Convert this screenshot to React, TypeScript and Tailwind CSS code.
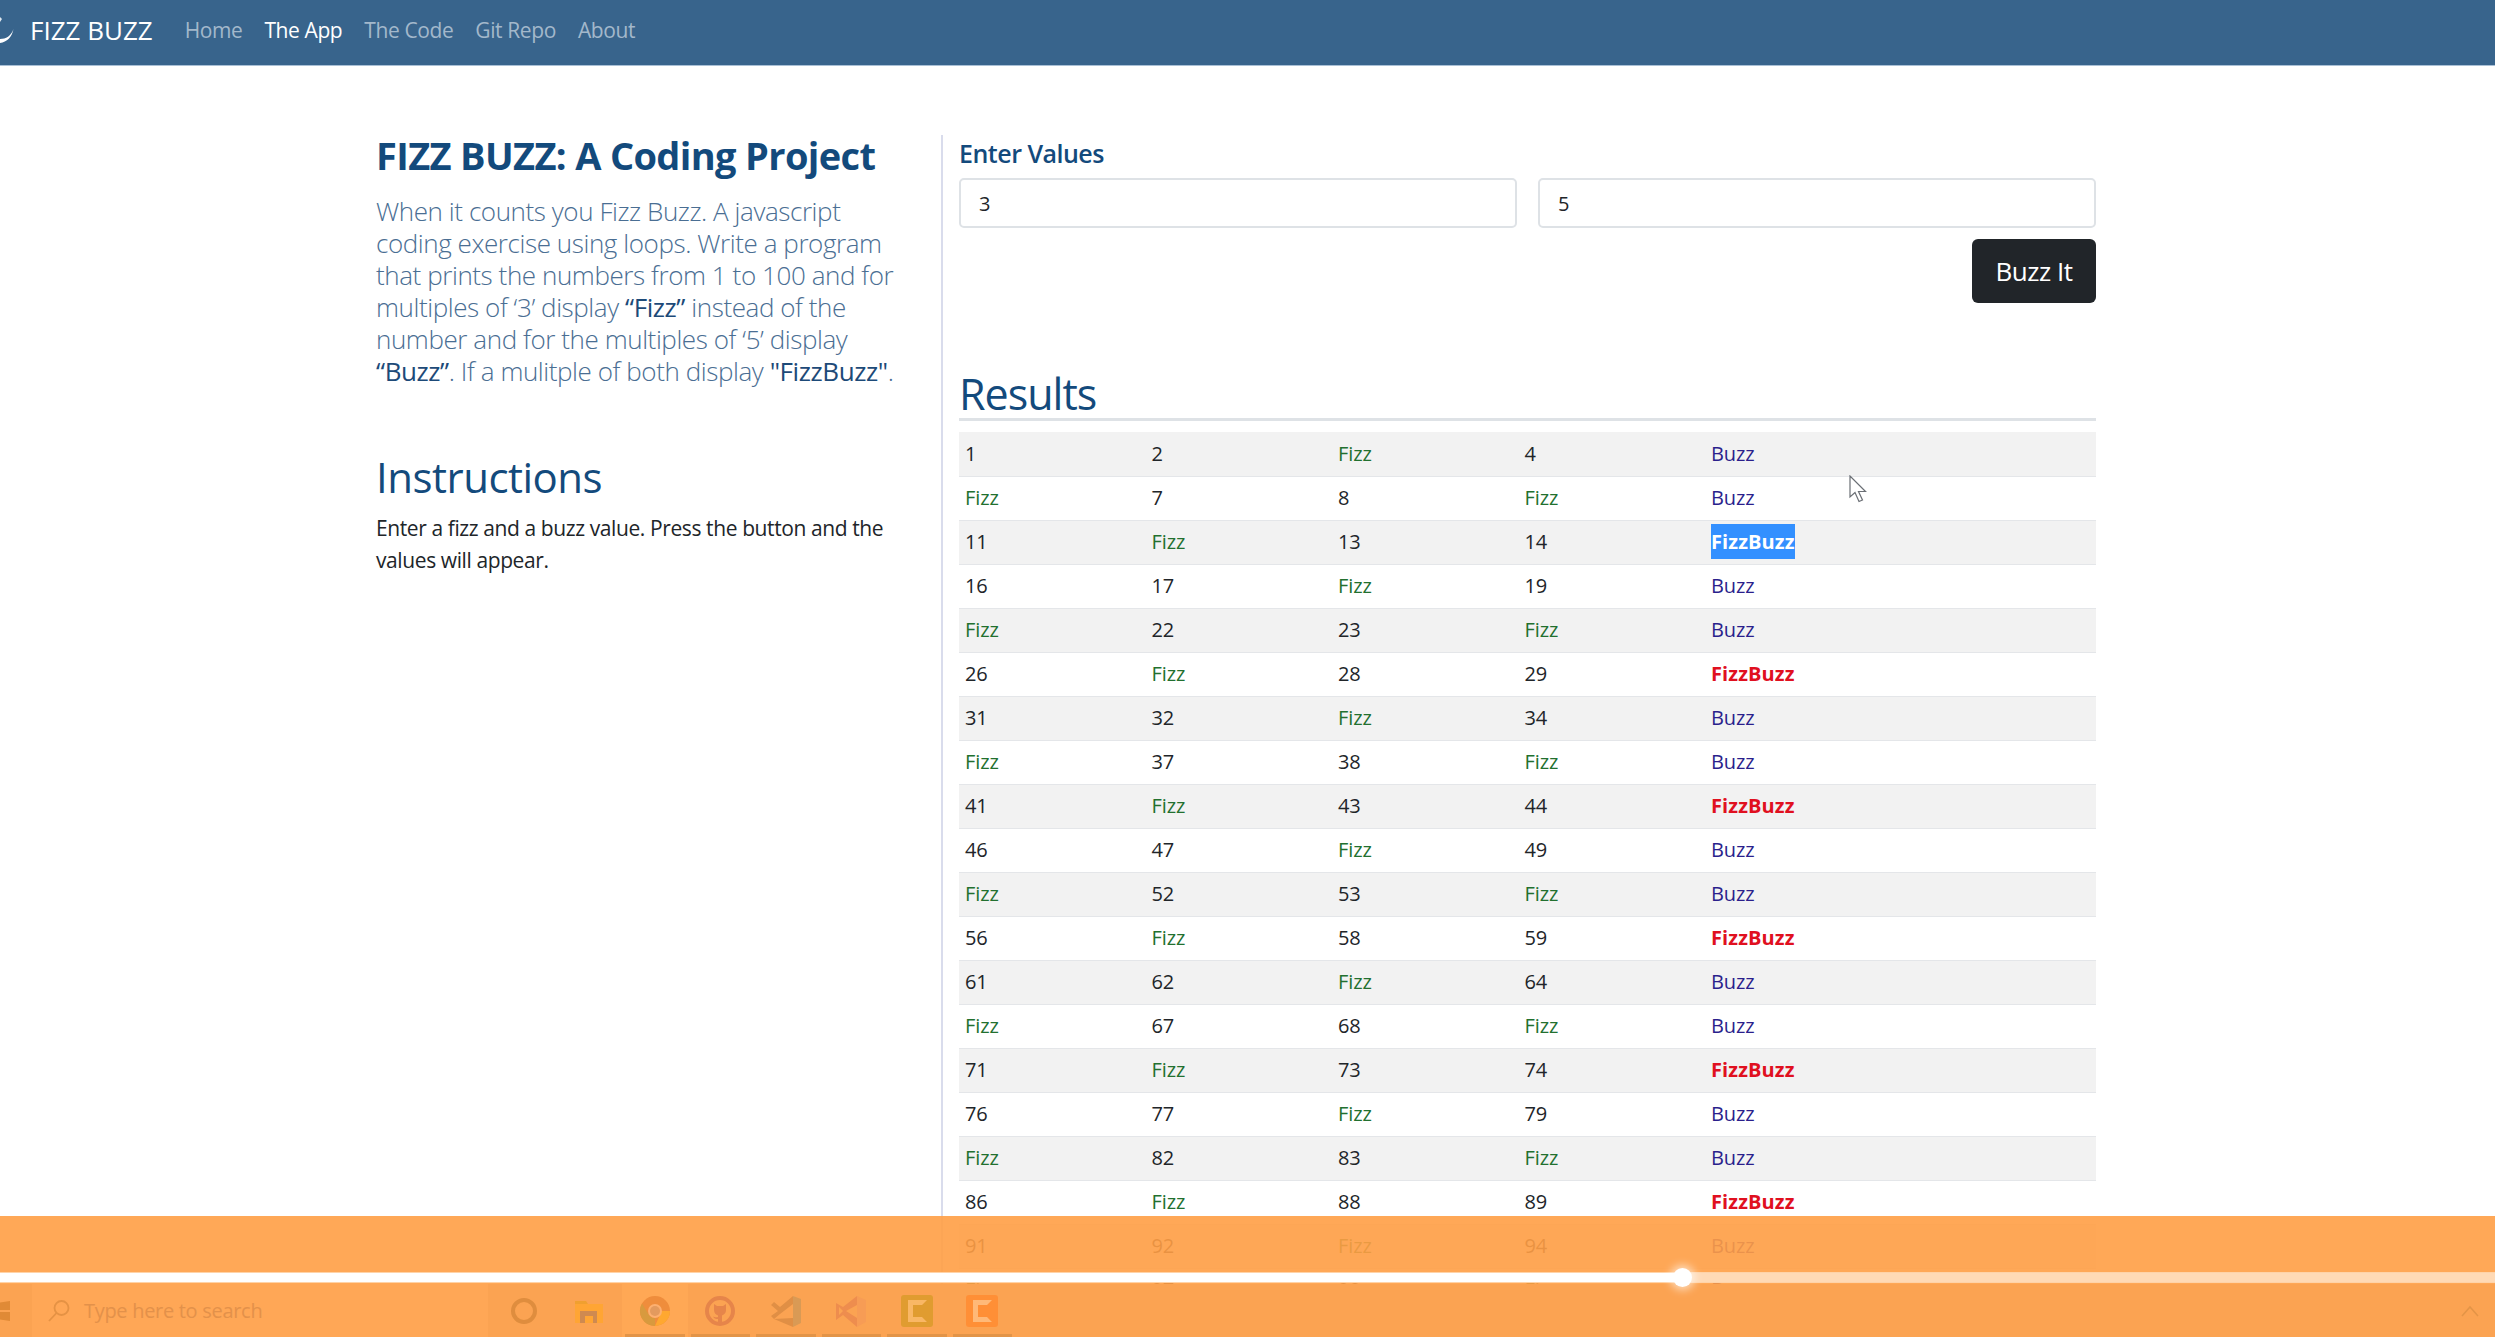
const NAV = ["Home", "The App", "The Code", "Git Repo", "About"];

function cellFor(n: number) {
  if (n % 15 === 0) return { text: "FizzBuzz", cls: "font-bold tracking-[0.1px] text-[#e0101f]" };
  if (n % 5 === 0) return { text: "Buzz", cls: "text-[#2b1f8c]" };
  if (n % 3 === 0) return { text: "Fizz", cls: "text-[#22702f]" };
  return { text: String(n), cls: "text-[#212529]" };
}

const ROWS = Array.from({ length: 20 }, (_, r) =>
  Array.from({ length: 5 }, (_, c) => r * 5 + c + 1)
);

function Moon() {
  return (
    <svg width="14" height="30" viewBox="0 0 14 30" className="shrink-0">
      <path d="M0 27C7 26 12 21 13.500 13C11 20 6 23 0 23Z" fill="#fff" />
      <path d="M0 1L2 3L0 6Z" fill="#dfe7ee" />
    </svg>
  );
}

function Navbar() {
  return (
    <nav className="flex h-[66px] items-center border-b border-[#a9c0d6] bg-[#38648c] pb-[4px]">
      <Moon />
      <span className="ml-[16px] text-[26px] text-white">FIZZ BUZZ</span>
      <ul className="ml-[32px] flex gap-[22px] text-[21px] tracking-[-0.4px] text-[#a3b8cb]">
        {NAV.map((item) => (
          <li key={item} className={item === "The App" ? "text-white" : ""}>
            {item}
          </li>
        ))}
      </ul>
    </nav>
  );
}

function Intro() {
  return (
    <section className="w-[565px] shrink-0 pr-[29px]">
      <h1 className="-mt-[5px] text-[38px] leading-[50px] font-bold tracking-[-0.65px] text-[#134a7c]">
        FIZZ BUZZ: A Coding Project
      </h1>
      <p className="mt-[15px] text-[26px] leading-[32px] font-light tracking-[-0.42px] text-[#4a6e93]">
        When it counts you Fizz Buzz. A javascript coding exercise using loops. Write a program
        that prints the numbers from 1 to 100 and for multiples of ‘3’ display{" "}
        <span className="font-normal text-[#1d4a78]">“Fizz”</span> instead of the number and for
        the multiples of ‘5’ display <span className="font-normal text-[#1d4a78]">“Buzz”</span>.
        If a mulitple of both display <span className="font-normal text-[#1d4a78]">"FizzBuzz"</span>.
      </p>
      <h2 className="mt-[62px] text-[42px] leading-[56px] font-medium tracking-[-0.5px] text-[#134a7c]">
        Instructions
      </h2>
      <p className="mt-[7px] text-[21px] leading-[32px] tracking-[-0.4px] text-[#212529]">
        Enter a fizz and a buzz value. Press the button and the values will appear.
      </p>
    </section>
  );
}

function ValueInput({ value }: { value: string }) {
  return (
    <input
      readOnly
      value={value}
      className="h-[50px] w-[558px] rounded-[5px] border-2 border-[#dee2e6] bg-white px-[18px] text-[20px] text-[#212529] outline-none"
    />
  );
}

function Results() {
  return (
    <section className="w-[1155px] shrink-0 border-l-2 border-[#d9dcec] pl-[16px]">
      <label className="block text-[25px] leading-[36px] font-semibold tracking-[-0.5px] text-[#134a7c]">
        Enter Values
      </label>
      <div className="mt-[7px] flex justify-between">
        <ValueInput value="3" />
        <ValueInput value="5" />
      </div>
      <div className="mt-[11px] flex justify-end">
        <button className="h-[64px] w-[124px] rounded-[6px] bg-[#212529] text-[26px] tracking-[-0.5px] text-white">
          Buzz It
        </button>
      </div>
      <h2 className="mt-[67px] border-b-[3px] border-[#dee2e6] text-[43px] leading-[48px] font-medium tracking-[-1px] text-[#134a7c]">
        Results
      </h2>
      <table className="mt-[11px] w-full table-fixed border-collapse text-[20px] tracking-[-0.1px]">
        <colgroup>
          <col className="w-[186.500px]" />
          <col className="w-[186.500px]" />
          <col className="w-[186.500px]" />
          <col className="w-[186.500px]" />
          <col />
        </colgroup>
        <tbody>
          {ROWS.map((row, i) => (
            <tr key={row[0]} className={`h-[44px] border-b border-[#e4e6e9] ${i % 2 === 0 ? "bg-[#f2f2f2]" : "bg-white"}`}>
              {row.map((n) => {
                const cell = cellFor(n);
                return (
                  <td key={n} className="px-[6px] py-0">
                    {n === 15 ? (
                      <span className="bg-[#3390ff] py-[4px] font-bold tracking-[0.1px] text-white">{cell.text}</span>
                    ) : (
                      <span className={cell.cls}>{cell.text}</span>
                    )}
                  </td>
                );
              })}
            </tr>
          ))}
        </tbody>
      </table>
    </section>
  );
}

function Cursor() {
  return (
    <svg width="18" height="28" viewBox="0 0 18 28" className="absolute top-[475px] left-[1849px]">
      <path d="M1 1V22L6 17.500L10 26.500L13.500 25L9.500 16.500H16.500Z" fill="#fff" stroke="#6b6f75" strokeWidth="1.200" />
    </svg>
  );
}

function TaskIcon({ children, under, active }: { children: React.ReactNode; under?: boolean; active?: boolean }) {
  return (
    <div className={`relative flex h-full w-[65.500px] items-center justify-center ${active ? "bg-[#ffa855]" : ""}`}>
      {children}
      {under && <div className="absolute right-[3px] bottom-0 left-[3px] h-[3px] bg-[#e29448]" />}
    </div>
  );
}

function Taskbar() {
  return (
    <div className="flex h-[53px] items-stretch bg-[#fba352]">
      <div className="flex w-[32px] items-center">
        <svg width="10" height="22" viewBox="0 0 10 22">
          <path d="M0 2.500L10 1V10H0ZM0 12H10V21L0 19.500Z" fill="#e08a36" />
        </svg>
      </div>
      <div className="flex w-[456px] items-center bg-[#ffa756] pl-[15px]">
        <svg width="24" height="24" viewBox="0 0 24 24" fill="none" stroke="#e59244" strokeWidth="1.800">
          <circle cx="14.500" cy="9" r="7" />
          <path d="M9.500 14L2 22" />
        </svg>
        <span className="ml-[13px] text-[20px] tracking-[-0.3px] text-[#e3914a]">Type here to search</span>
      </div>
      <div className="ml-[3px] flex h-full">
        <TaskIcon>
          <div className="size-[26px] rounded-full border-[4px] border-[#df8d3e]" />
        </TaskIcon>
        <TaskIcon>
          <svg width="30" height="26" viewBox="0 0 30 26">
            <path d="M1 3H12L14 6H1Z" fill="#f0a030" />
            <path d="M1 6H29V25H1Z" fill="#ffa534" />
            <path d="M6 25V13H23V25H19V18H11V25Z" fill="#cf8a50" />
          </svg>
        </TaskIcon>
        <TaskIcon under active>
          <svg width="32" height="32" viewBox="0 0 32 32">
            <circle cx="16" cy="16" r="15" fill="#ef8d3c" />
            <path d="M16 31A15 15 0 0 1 3 8.500L10 20A7 7 0 0 0 16 23Z" fill="#d89a3e" />
            <path d="M16 31A15 15 0 0 0 31 16H21A7 7 0 0 1 20 22Z" fill="#ffa830" />
            <circle cx="16" cy="16" r="7" fill="#fdb070" />
            <circle cx="16" cy="16" r="5" fill="#e39a5e" />
          </svg>
        </TaskIcon>
        <TaskIcon under>
          <svg width="32" height="32" viewBox="0 0 32 32">
            <circle cx="16" cy="16" r="13" fill="none" stroke="#e6854a" strokeWidth="4" />
            <path d="M10 9L13 11H19L22 9V15C22 19 19 20 18 20.500V27H14V24C11 24.500 10 23 9 21.500C10 22 12 22.500 14 22V20.500C12 20 10 18 10 15Z" fill="#e6854a" />
          </svg>
        </TaskIcon>
        <TaskIcon under>
          <svg width="32" height="32" viewBox="0 0 32 32">
            <path d="M23 1L31 4V28L23 32Z" fill="#d99a55" />
            <path d="M23 1V9L10 19L4 24L1 21L8 16L1 10L4 7L10 12Z" fill="#e08f45" />
            <path d="M4 24L23 23V32Z" fill="#e08f45" />
          </svg>
        </TaskIcon>
        <TaskIcon under>
          <svg width="32" height="32" viewBox="0 0 32 32">
            <path d="M22 1L31 5V27L22 32Z" fill="#f79c55" />
            <path d="M22 1V10L11 16L22 23V32L8 20L1 25V8L8 12ZM4 12V20L8 16Z" fill="#ee8d4e" />
          </svg>
        </TaskIcon>
        <TaskIcon under>
          <div className="flex size-[32px] items-center justify-center rounded-[3px] bg-[#e09c30]">
            <svg width="20" height="24" viewBox="0 0 20 24">
              <path d="M1 1H20L15 6H6V18H15L20 23H1Z" fill="#f9b765" />
            </svg>
          </div>
        </TaskIcon>
        <TaskIcon under>
          <div className="flex size-[32px] items-center justify-center rounded-[3px] bg-[#ff8f36]">
            <svg width="20" height="24" viewBox="0 0 20 24">
              <path d="M1 1H20L15 6H6V18H15L20 23H1Z" fill="#ffb978" />
            </svg>
          </div>
        </TaskIcon>
      </div>
      <div className="ml-auto flex items-center pr-[16px]">
        <svg width="18" height="12" viewBox="0 0 18 12" fill="none" stroke="#e39447" strokeWidth="1.500">
          <path d="M1 11L9 2L17 11" />
        </svg>
      </div>
    </div>
  );
}

function PlayerOverlay() {
  return (
    <div className="absolute right-0 bottom-0 left-0 flex h-[121px] flex-col bg-[#ff9e45]/90">
      <div className="relative mt-[56px] flex h-[11px] items-stretch border-y border-[#ffd3a8]">
        <div className="w-[1683px] bg-white" />
        <div className="flex-1 bg-[#ffdab6]" />
        <div className="absolute top-[-5px] left-[1673px] size-[19px] rounded-full bg-white shadow-[0_0_8px_3px_rgba(255,255,255,0.6)]" />
      </div>
      <div className="mt-auto">
        <Taskbar />
      </div>
    </div>
  );
}

export default function App() {
  return (
    <div className="relative h-[1337px] w-[2495px] overflow-hidden bg-white font-['Open_Sans',sans-serif]">
      <Navbar />
      <main className="ml-[376px] flex pt-[69px]">
        <Intro />
        <Results />
      </main>
      <Cursor />
      <PlayerOverlay />
    </div>
  );
}
